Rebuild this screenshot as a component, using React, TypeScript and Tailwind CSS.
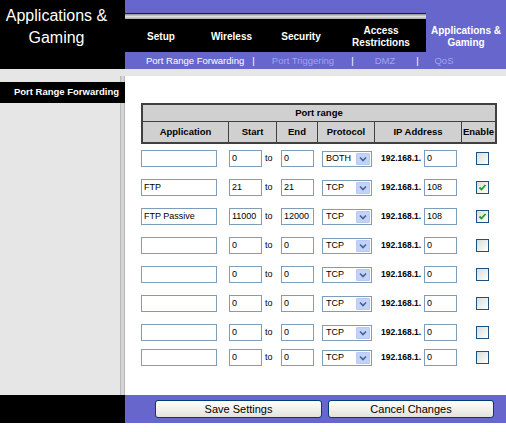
import React from 'react';

const rows = [
  { app: '', start: '0', end: '0', proto: 'BOTH', ip: '0', on: false },
  { app: 'FTP', start: '21', end: '21', proto: 'TCP', ip: '108', on: true },
  { app: 'FTP Passive', start: '11000', end: '12000', proto: 'TCP', ip: '108', on: true },
  { app: '', start: '0', end: '0', proto: 'TCP', ip: '0', on: false },
  { app: '', start: '0', end: '0', proto: 'TCP', ip: '0', on: false },
  { app: '', start: '0', end: '0', proto: 'TCP', ip: '0', on: false },
  { app: '', start: '0', end: '0', proto: 'TCP', ip: '0', on: false },
  { app: '', start: '0', end: '0', proto: 'TCP', ip: '0', on: false },
];

const tabs = [
  { label: ['Setup'], w: 'w-[72px]' },
  { label: ['Wireless'], w: 'w-[69px]' },
  { label: ['Security'], w: 'w-[70px]' },
  { label: ['Access', 'Restrictions'], w: 'w-[90px]' },
];

function TextBox({ value, className }: { value: string; className: string }) {
  return (
    <div
      className={`h-[17px] border border-[#7f9db9] bg-white pl-[2px] text-[9px] leading-[14px] text-black ${className}`}
    >
      {value}
    </div>
  );
}

function Select({ value }: { value: string }) {
  return (
    <div className="ml-[8px] flex h-[16px] w-[50px] items-center justify-between border border-[#7f9db9] bg-white pl-[3px] pr-[1px]">
      <span className="text-[9px] leading-none">{value}</span>
      <div className="flex h-[12px] w-[14px] items-center justify-center rounded-[1px] border border-[#b9c9ef] bg-[#c1d3fb]">
        <svg width="8" height="6" viewBox="0 0 8 6">
          <path d="M1 1.5 L4 4.5 L7 1.5" fill="none" stroke="#4d6185" strokeWidth="1.6" />
        </svg>
      </div>
    </div>
  );
}

function Check({ on }: { on: boolean }) {
  return (
    <div className="ml-[19px] flex h-[13px] w-[13px] items-center justify-center border border-[#1c5180] bg-gradient-to-br from-[#dcdcd7] to-white">
      {on && (
        <svg width="9" height="9" viewBox="0 0 9 9">
          <path d="M1.5 4.5 L3.5 6.5 L7.5 2" fill="none" stroke="#21a121" strokeWidth="1.8" />
        </svg>
      )}
    </div>
  );
}

export default function App() {
  return (
    <div className="flex h-[432px] w-[506px] flex-col overflow-hidden bg-white font-['Liberation_Sans',Arial,sans-serif]">
      {/* header */}
      <div className="flex h-[69px]">
        <div className="flex w-[125px] flex-col items-start bg-black pt-[5px]">
          <div className="w-[113px] text-center text-[16px] leading-[22px] text-white">
            Applications &amp;
            <br />
            Gaming
          </div>
        </div>
        <div className="flex flex-1 flex-col">
          <div className="flex h-[52px]">
            <div className="flex w-[301px] flex-col">
              <div className="h-[13px] bg-[#6666cc]" />
              <div className="h-[1px] bg-[#222]" />
              <div className="h-[5px] bg-gradient-to-b from-[#8c8c8c] via-[#e0e0e0] to-[#a8a8a8]" />
              <div className="flex flex-1 bg-black">
                {tabs.map((t) => (
                  <div
                    key={t.label[0]}
                    className={`${t.w} flex flex-col items-center justify-center pt-[2px] text-[10px] font-bold leading-[12px] text-white`}
                  >
                    {t.label.map((l) => (
                      <span key={l}>{l}</span>
                    ))}
                  </div>
                ))}
              </div>
            </div>
            <div className="flex flex-1 flex-col items-center bg-[#6666cc] pt-[25px] text-[10px] font-bold leading-[12px] text-white">
              <span>Applications &amp;</span>
              <span>Gaming</span>
            </div>
          </div>
          <div className="flex h-[17px] items-center bg-[#6666cc] pl-[21px] text-[9.5px] leading-none">
            <span className="w-[104px] text-white">Port Range Forwarding</span>
            <span className="w-[7px] text-center text-white">|</span>
            <span className="w-[92px] text-center text-[#a3a3ee]">Port Triggering</span>
            <span className="w-[7px] text-center text-white">|</span>
            <span className="w-[58px] text-center text-[#a3a3ee]">DMZ</span>
            <span className="w-[7px] text-center text-white">|</span>
            <span className="w-[46px] text-center text-[#a3a3ee]">QoS</span>
          </div>
        </div>
      </div>

      {/* main */}
      <div className="flex h-[326px]">
        <div className="flex w-[125px] flex-col bg-[#e6e6e6]">
          <div className="h-[7px]" />
          <div className="flex h-[6px]">
            <div className="w-[120px]" />
            <div className="w-[5px] border-x border-[#b8b8b8] bg-[#d4d4d4]" />
          </div>
          <div className="flex h-[21px] items-center justify-end bg-black pr-[6px] text-[9.5px] font-bold text-white">
            Port Range Forwarding
          </div>
          <div className="flex flex-1">
            <div className="w-[120px]" />
            <div className="w-[5px] border-x border-[#b8b8b8] bg-[#d4d4d4]" />
          </div>
        </div>
        <div className="flex flex-1 flex-col bg-[#e6e6e6] pt-[7px]">
          <div className="flex-1 bg-white pl-[16px] pt-[27px]">
            {/* table header */}
            <div className="w-[356px] border-2 border-[#404040] bg-[#d0d0d0] text-[9.5px] font-bold text-black">
              <div className="flex h-[17px] items-center justify-center border-b border-[#404040]">Port range</div>
              <div className="flex h-[20px]">
                <div className="flex w-[86px] items-center justify-center border-r border-[#404040]">Application</div>
                <div className="flex w-[48px] items-center justify-center border-r border-[#404040]">Start</div>
                <div className="flex w-[41px] items-center justify-center border-r border-[#404040]">End</div>
                <div className="flex w-[57px] items-center justify-center border-r border-[#404040]">Protocol</div>
                <div className="flex w-[87px] items-center justify-center border-r border-[#404040]">IP Address</div>
                <div className="flex w-[33px] items-center justify-center">Enable</div>
              </div>
            </div>
            {/* rows */}
            {rows.map((r, i) => (
              <div
                key={i}
                className={`flex h-[17px] items-center ${i === 0 ? 'mt-[6px]' : i === 7 ? 'mt-[8px]' : 'mt-[12px]'}`}
              >
                <TextBox value={r.app} className="w-[76px]" />
                <TextBox value={r.start} className="ml-[12px] w-[33px]" />
                <span className="w-[19px] pl-[3px] text-[9px] text-black">to</span>
                <TextBox value={r.end} className="w-[33px]" />
                <Select value={r.proto} />
                <span className="ml-[9px] w-[43px] text-[8.5px] font-bold text-black">192.168.1.</span>
                <TextBox value={r.ip} className="w-[33px]" />
                <Check on={r.on} />
              </div>
            ))}
          </div>
        </div>
      </div>

      {/* footer */}
      <div className="flex h-[28px]">
        <div className="w-[125px] bg-black" />
        <div className="flex flex-1 items-center bg-[#6666cc] pl-[30px]">
          <button className="h-[18px] w-[167px] rounded-[3px] border border-[#003c74] bg-gradient-to-b from-white to-[#e3e3db] text-[11px] leading-none text-black">
            Save Settings
          </button>
          <button className="ml-[6px] h-[18px] w-[166px] rounded-[3px] border border-[#003c74] bg-gradient-to-b from-white to-[#e3e3db] text-[11px] leading-none text-black">
            Cancel Changes
          </button>
        </div>
      </div>
      <div className="flex-1 bg-white" />
    </div>
  );
}
